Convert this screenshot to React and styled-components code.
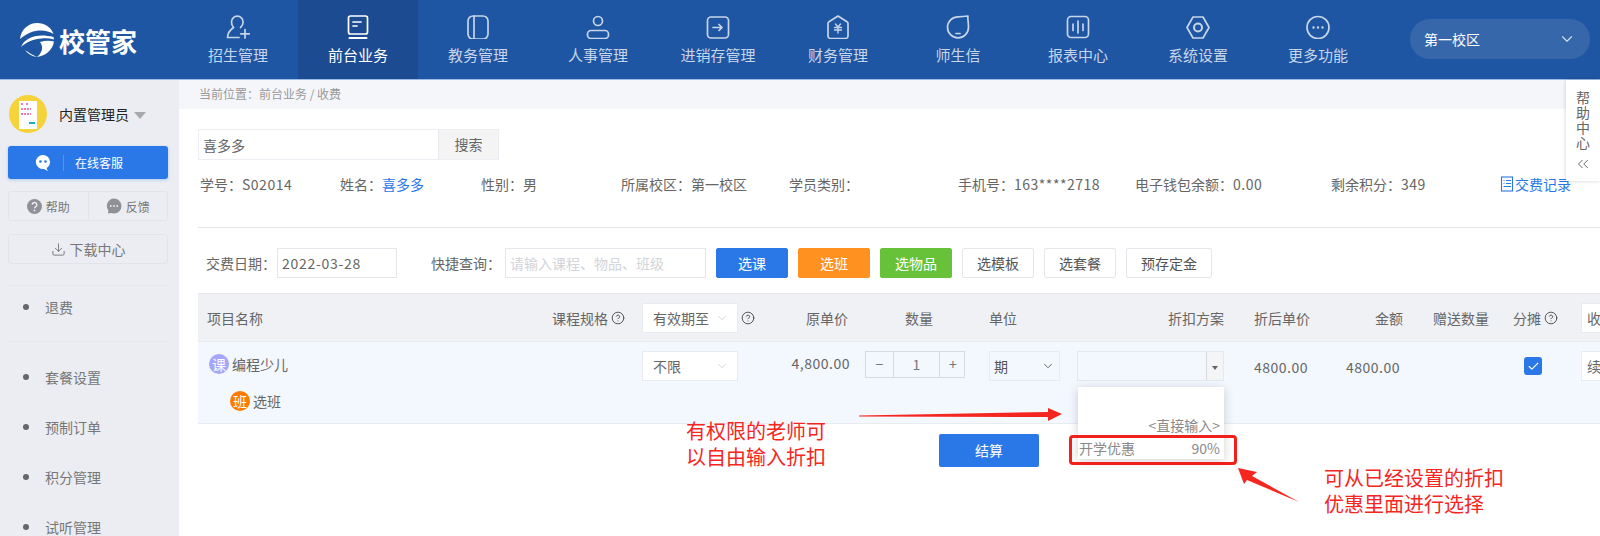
import React from 'react'
import styled, { createGlobalStyle } from 'styled-components'
import { ChevronDown, CircleHelp, ChevronsLeft, Check, Download } from 'lucide-react'

const GlobalStyle = createGlobalStyle`
  html, body {
    margin: 0;
    padding: 0;
    height: 100%;
    overflow: hidden;
    background: #fff;
  }
  body, input {
    font-family: "Noto Sans CJK SC", "Noto Sans", sans-serif;
    font-size: 14px;
    color: #666;
  }
  * {
    box-sizing: border-box;
  }
`

const Page = styled.div`
  position: relative;
  width: 1600px;
  height: 536px;
  overflow: hidden;
`

const Header = styled.header`
  display: flex;
  height: 80px;
  background: #1f56a3;
  border-bottom: 1px solid #9dbbe2;
`

const LogoBox = styled.div`
  width: 178px;
  display: flex;
  align-items: center;
  padding: 1px 0 0 20px;
  gap: 5px;
  color: #fff;
  font-size: 26px;
  font-weight: 700;
`

const Nav = styled.nav`
  display: flex;
`

const NavItem = styled.div`
  width: 120px;
  height: 79px;
  padding-top: 15px;
  display: flex;
  flex-direction: column;
  align-items: center;
  gap: 6px;
  font-size: 15px;
  line-height: 20px;
  color: ${p => (p.$active ? '#fff' : '#c7d5e9')};
  background: ${p => (p.$active ? '#1d4b92' : 'transparent')};
  svg {
    display: block;
  }
`

const Campus = styled.div`
  width: 180px;
  height: 40px;
  margin: 19px 0 0 32px;
  padding: 0 14px;
  border-radius: 20px;
  background: #3767ab;
  color: #fff;
  display: flex;
  align-items: center;
  justify-content: space-between;
  font-size: 14px;
`

const Body = styled.div`
  display: flex;
  height: 456px;
`

const Sidebar = styled.aside`
  width: 179px;
  flex: none;
  background: #ebedf2;
  padding: 15px 11px 0 8px;
  overflow: hidden;
`

const UserRow = styled.div`
  display: flex;
  align-items: center;
  height: 38px;
  padding-left: 1px;
  color: #222;
  font-size: 14px;
`

const UserName = styled.span`
  margin-left: 12px;
`

const Caret = styled.i`
  width: 0;
  height: 0;
  margin: 3px 0 0 5px;
  border-left: 6px solid transparent;
  border-right: 6px solid transparent;
  border-top: 7px solid #a6a8ad;
`

const ServiceButton = styled.div`
  height: 33px;
  margin-top: 13px;
  background: #2a78e8;
  border-radius: 3px;
  color: #fff;
  font-size: 12px;
  display: flex;
  align-items: center;
  padding-left: 27px;
  box-shadow: 0 1px 3px rgba(42, 120, 232, 0.3);
`

const ServiceLine = styled.span`
  width: 1px;
  height: 16px;
  margin: 0 11px 0 12px;
  background: rgba(255, 255, 255, 0.2);
`

const HelpGroup = styled.div`
  display: flex;
  height: 30px;
  margin-top: 12px;
  border: 1px solid #e2e4ea;
  border-radius: 3px;
`

const HelpCell = styled.div`
  flex: 1;
  display: flex;
  align-items: center;
  justify-content: center;
  gap: 4px;
  font-size: 12px;
  color: #777;
  & + & {
    border-left: 1px solid #e2e4ea;
  }
`

const DownloadCell = styled.div`
  height: 30px;
  margin-top: 13px;
  border: 1px solid #e2e4ea;
  border-radius: 3px;
  display: flex;
  align-items: center;
  justify-content: center;
  gap: 4px;
  color: #777;
`

const MenuGroup = styled.div`
  margin-top: ${p => p.$first ? '21px' : '0'};
  padding: ${p => p.$first ? '0 0 13px' : '10px 0 0'};
  border-top: 1px solid #e4e6eb;
`

const MenuItem = styled.div`
  display: flex;
  align-items: center;
  height: ${p => (p.$short ? '42px' : '50px')};
  padding-left: 15px;
  color: #777;
  &::before {
    content: '';
    width: 6px;
    height: 6px;
    margin-right: 16px;
    border-radius: 50%;
    background: #666;
  }
`

const Main = styled.main`
  flex: 1;
  min-width: 0;
  overflow: hidden;
`

const Crumb = styled.div`
  height: 29px;
  padding-left: 20px;
  line-height: 27px;
  font-size: 12px;
  color: #999;
  background: #f5f6fa;
`

const Content = styled.div`
  padding: 20px 0 0 19px;
`

const SearchBar = styled.div`
  display: flex;
  width: 301px;
  height: 31px;
  border: 1px solid #eceef3;
`

const SearchInput = styled.input`
  flex: 1;
  min-width: 0;
  border: 0;
  outline: 0;
  padding: 0 4px;
  color: #666;
`

const SearchButton = styled.div`
  width: 60px;
  background: #f4f4f5;
  border-left: 1px solid #e8e9ee;
  text-align: center;
  line-height: 29px;
`

const InfoRow = styled.div`
  display: grid;
  grid-template-columns: 140px 141px 140px 168px 169px 177px 196px 169px auto;
  margin: 14px 0 0 2px;
  line-height: 20px;
  white-space: nowrap;
`

const Num = styled.span`
  letter-spacing: 0.5px;
`

const Link = styled.span`
  color: #2a78e8;
`

const RecordLink = styled(Link)`
  display: flex;
  align-items: center;
  gap: 1px;
`

const Divider = styled.hr`
  height: 1px;
  margin: 33px 0 0;
  border: 0;
  background: #e4e5e9;
`

const Toolbar = styled.div`
  display: flex;
  align-items: center;
  gap: 10px;
  margin-top: 20px;
  padding-left: 8px;
`

const Label = styled.span`
  width: ${p => p.$w}px;
  flex: none;
  white-space: nowrap;
`

const TextInput = styled.input`
  width: ${p => p.$w}px;
  height: 30px;
  margin: ${p => p.$m || 0};
  padding: 0 4px;
  border: 1px solid #e4e6ec;
  outline: 0;
  color: #666;
  letter-spacing: ${p => (p.$num ? '0.7px' : '0')};
  &::placeholder {
    color: #d2d4d9;
  }
`

const Button = styled.div`
  min-width: 72px;
  height: 30px;
  padding: 0 14px;
  border-radius: 2px;
  line-height: 28px;
  text-align: center;
  white-space: nowrap;
  border: 1px solid ${p => p.$bg || '#e4e6ec'};
  background: ${p => p.$bg || '#fff'};
  color: ${p => (p.$bg ? '#fff' : '#555')};
`

const Table = styled.div`
  margin-top: 15px;
  width: 1500px;
`

const columns = '342px 94px 136px 87px 124px 88px 164px 87px 92px 88px 73px 100px'

const HeadRow = styled.div`
  display: grid;
  grid-template-columns: ${columns};
  align-items: center;
  height: 49px;
  background: #f0f1f5;
  border-top: 1px solid #e8e9ee;
  border-bottom: 1px solid #eaecf1;
`

const DataRow = styled.div`
  display: grid;
  grid-template-columns: ${columns};
  align-items: start;
  height: 82px;
  padding-top: 9px;
  background: #f3f8fe;
  border-bottom: 1px solid #e8ebf0;
`

const Cell = styled.div`
  display: flex;
  align-items: center;
  justify-content: ${p => p.$end ? 'flex-end' : p.$center ? 'center' : 'flex-start'};
  gap: 3px;
  padding: ${p => `${p.$top || 0}px ${p.$r || 0}px 0 ${p.$l || 0}px`};
  white-space: nowrap;
`

const NameCell = styled.div`
  padding-left: 11px;
`

const NameLine = styled.div`
  display: flex;
  align-items: center;
  gap: 3px;
  height: 20px;
  margin-top: ${p => p.$top || 3}px;
  padding-left: ${p => p.$indent || 0}px;
`

const Badge = styled.span`
  width: 20px;
  height: 20px;
  border-radius: 50%;
  flex: none;
  background: ${p => p.$bg};
  color: #fff;
  font-size: 14px;
  line-height: 20px;
  text-align: center;
`

const SelectBox = styled.div`
  width: ${p => p.$w}px;
  height: 30px;
  flex: none;
  padding: 0 ${p => p.$pr || 8}px 0 ${p => p.$pl || 10}px;
  display: flex;
  align-items: center;
  justify-content: space-between;
  background: #fff;
  border: 1px solid #e8ebf2;
  overflow: hidden;
  color: #666;
`

const UnitBox = styled(SelectBox)`
  background: transparent;
  color: #555;
`

const Stepper = styled.div`
  display: grid;
  grid-template-columns: 27px 46px 27px;
  width: 100px;
  height: 27px;
  border: 1px solid #d8dade;
  text-align: center;
  line-height: 25px;
  color: #777;
`

const StepCell = styled.span`
  & + & {
    border-left: 1px solid #d8dade;
  }
`

const Combo = styled.div`
  width: 147px;
  height: 30px;
  display: flex;
  justify-content: flex-end;
  border: 1px solid #e4e8f0;
`

const ComboArrow = styled.div`
  width: 17px;
  display: flex;
  align-items: center;
  justify-content: center;
  border-left: 1px solid #d6d9de;
  background: #f4f5f7;
  &::after {
    content: '';
    margin-top: 3px;
    border-left: 3px solid transparent;
    border-right: 3px solid transparent;
    border-top: 4px solid #666;
  }
`

const CheckBox = styled.span`
  width: 18px;
  height: 18px;
  border-radius: 3px;
  background: #2a78e8;
  color: #fff;
  display: flex;
  align-items: center;
  justify-content: center;
`

const SettleRow = styled.div`
  margin: 10px 0 0 741px;
`

const SettleButton = styled.div`
  width: 100px;
  height: 33px;
  border-radius: 2px;
  background: #2a78e8;
  color: #fff;
  text-align: center;
  line-height: 33px;
`

const Popup = styled.div`
  position: absolute;
  left: 1078px;
  top: 387px;
  width: 146px;
  height: 72px;
  padding: 27px 4px 0 1px;
  background: #fff;
  box-shadow: 0 2px 10px rgba(0, 0, 0, 0.18);
  color: #8a8a8a;
`

const PopupLine = styled.div`
  display: flex;
  justify-content: ${p => (p.$between ? 'space-between' : 'flex-end')};
  height: 22px;
  line-height: 22px;
  margin-bottom: 1px;
`

const Note = styled.div`
  position: absolute;
  left: ${p => p.$x}px;
  top: ${p => p.$y}px;
  color: #f5261f;
  font-size: 20px;
  line-height: 26px;
  white-space: nowrap;
`

const RedFrame = styled.div`
  position: absolute;
  left: 1069px;
  top: 435px;
  width: 168px;
  height: 30px;
  border: 3px solid #f0211a;
  border-radius: 4px;
`

const Marks = styled.svg`
  position: absolute;
  left: 0;
  top: 0;
  pointer-events: none;
`

const HelpFloat = styled.div`
  position: absolute;
  right: 0;
  top: 80px;
  width: 34px;
  height: 101px;
  padding-top: 11px;
  display: flex;
  flex-direction: column;
  align-items: center;
  background: #fff;
  box-shadow: 0 0 4px rgba(0, 0, 0, 0.18);
  color: #666;
  svg {
    margin-top: 4px;
  }
`

const HelpText = styled.span`
  writing-mode: vertical-rl;
  font-size: 14px;
  line-height: 16px;
  letter-spacing: 1px;
`

const Stroke = ({ children, size = 24 }) => (
  <svg width={size} height={size} viewBox="0 0 24 24" fill="none" stroke="currentColor" strokeWidth="1.7" strokeLinecap="round" strokeLinejoin="round">
    {children}
  </svg>
)

const navItems = [
  ['招生管理', <><path d="M7.5 12.5C5.8 10.8 5.5 8.5 5.5 7a5.8 5.8 0 0 1 11.6 0c0 2-.9 4-2.6 5.5" /><path d="M7.5 12.5C4 15 1.6 18.500 1.500 22.500H13" /><path d="M19 14.500V23M14.800 18.800H23.300" /></>],
  ['前台业务', <><rect x="2.500" y="1" width="19" height="18" rx="2" /><path d="M7 7h8M7 11h4" /><path d="M3.500 23h17" strokeWidth="2" /></>],
  ['教务管理', <><rect x="2" y="1" width="20" height="23" rx="5" /><path d="M8 1v23" /></>],
  ['人事管理', <><circle cx="12" cy="6" r="4.500" /><rect x="1.500" y="15.500" width="21" height="8" rx="3.500" /></>],
  ['进销存管理', <><rect x="1.500" y="2" width="21" height="21" rx="3.500" /><path d="M7 12.500h9M13 9.500l3 3-3 3" /></>],
  ['财务管理', <><path d="M12 1L21 6.800a2 2 0 0 1 1 1.700V21a2.500 2.500 0 0 1-2.500 2.500h-15A2.500 2.500 0 0 1 2 21V8.500a2 2 0 0 1 1-1.700z" /><path d="M9.500 9l2.500 3 2.500-3M8.500 12.500h7M8.500 15h7M12 12.500V18" strokeWidth="1.400" /></>],
  ['师生信', <><path d="M12 1.800c3 0 6-.2 10-.8-.8 1.500.5 5 .5 11.500a10.500 10.500 0 1 1-10.500-10.700z" /><path d="M10 18.500h4" /></>],
  ['报表中心', <><rect x="1.500" y="1.500" width="21" height="21" rx="3.500" /><path d="M7 9v6.500M12 6v12M17 9v6.500" /></>],
  ['系统设置', <><path d="M7 2h10l6 10.500L17 23H7L1 12.500z" /><circle cx="12" cy="12.500" r="4" strokeWidth="2" /></>],
  ['更多功能', <><circle cx="12" cy="12.500" r="11" /><path d="M7.500 12.500h.01M12 12.500h.01M16.500 12.500h.01" strokeWidth="2.400" /></>],
]

const Logo = () => (
  <svg width="34" height="34" viewBox="0 0 34 34" fill="#fff">
    <path d="M0 16C1 6 9 0 17 0C25 0 31 4 33.500 11C26 6 12 5 0 16Z" />
    <path d="M1 24C5 14 18 10 33.500 14L34 16.500C30 15.500 26 15 22 15.500C14 16 6 19 1 24Z" />
    <path d="M20 19C25 17.500 30 17.500 34 18.500C33 26 26 33 17 34C22 30 24 24 20 19Z" />
    <path d="M5 27C9 30 13 32 17 34C12 33.500 8 31 5 27Z" />
  </svg>
)

const Avatar = () => (
  <svg width="38" height="38" viewBox="0 0 38 38">
    <defs>
      <clipPath id="avatar-clip"><circle cx="19" cy="19" r="19" /></clipPath>
    </defs>
    <g clipPath="url(#avatar-clip)">
      <rect width="38" height="38" fill="#f5d33a" />
      <path d="M30 38L38 28V38Z" fill="#555" />
      <rect x="10" y="6" width="18" height="28" fill="#fff" />
      <path d="M12 9h3M17 9h3M12 14h10M12 19h10" stroke="#e8559a" strokeWidth="1.500" strokeDasharray="2 1" />
      <path d="M20 28h6" stroke="#1ba9c9" strokeWidth="2" />
    </g>
  </svg>
)

const ServiceIcon = () => (
  <svg width="16" height="18" viewBox="0 0 16 18">
    <path d="M8 1a7 7 0 0 1 7 7c0 3-1.500 5-3.500 6l1.500 3-4-2.100A7 7 0 1 1 8 1z" fill="#fff" />
    <circle cx="5.500" cy="7.500" r="1.300" fill="#2a78e8" />
    <circle cx="10.500" cy="7.500" r="1.300" fill="#2a78e8" />
  </svg>
)

const HelpIcon = () => (
  <svg width="15" height="15" viewBox="0 0 15 15">
    <circle cx="7.500" cy="7.500" r="7.500" fill="#8f9196" />
    <path d="M5.200 5.800a2.300 2.300 0 1 1 3.400 2c-.8.400-1.100.800-1.100 1.500" fill="none" stroke="#ebedf2" strokeWidth="1.500" />
    <circle cx="7.500" cy="11.500" r="0.900" fill="#ebedf2" />
  </svg>
)

const FeedbackIcon = () => (
  <svg width="16" height="16" viewBox="0 0 16 16">
    <path d="M8 .5a7.500 7.500 0 0 1 0 15c-1 0-2-.2-2.800-.5L2 15.500l.4-3A7.500 7.500 0 0 1 8 .5z" fill="#8f9196" />
    <path d="M4.800 8h.01M8 8h.01M11.200 8h.01" stroke="#ebedf2" strokeWidth="1.800" strokeLinecap="round" />
  </svg>
)

const RecordIcon = () => (
  <svg width="14" height="16" viewBox="0 0 14 16" fill="none" stroke="#2a78e8" strokeWidth="1.100">
    <rect x="1.500" y="1" width="11" height="14" />
    <path d="M3.500 4.500h1M6 4.500h5M3.500 7.500h1M6 7.500h5M3.500 10.500h7.500" />
  </svg>
)

const Tip = () => <CircleHelp size={14} strokeWidth={1.500} color="#444" />

function App () {
  return (
    <Page>
      <GlobalStyle />
      <Header>
        <LogoBox><Logo />校管家</LogoBox>
        <Nav>
          {navItems.map(([label, icon], i) => (
            <NavItem key={label} $active={i === 1}>
              <Stroke>{icon}</Stroke>
              {label}
            </NavItem>
          ))}
        </Nav>
        <Campus>第一校区<ChevronDown size={18} strokeWidth={1.500} color="#d5e0f0" /></Campus>
      </Header>
      <Body>
        <Sidebar>
          <UserRow><Avatar /><UserName>内置管理员</UserName><Caret /></UserRow>
          <ServiceButton><ServiceIcon /><ServiceLine />在线客服</ServiceButton>
          <HelpGroup>
            <HelpCell><HelpIcon />帮助</HelpCell>
            <HelpCell><FeedbackIcon />反馈</HelpCell>
          </HelpGroup>
          <DownloadCell><Download size={15} strokeWidth={1.500} />下载中心</DownloadCell>
          <MenuGroup $first><MenuItem $short>退费</MenuItem></MenuGroup>
          <MenuGroup>
            <MenuItem>套餐设置</MenuItem>
            <MenuItem>预制订单</MenuItem>
            <MenuItem>积分管理</MenuItem>
            <MenuItem>试听管理</MenuItem>
          </MenuGroup>
        </Sidebar>
        <Main>
          <Crumb>当前位置：前台业务 / 收费</Crumb>
          <Content>
            <SearchBar>
              <SearchInput readOnly value="喜多多" />
              <SearchButton>搜索</SearchButton>
            </SearchBar>
            <InfoRow>
              <span>学号：<Num>S02014</Num></span>
              <span>姓名：<Link>喜多多</Link></span>
              <span>性别：男</span>
              <span>所属校区：第一校区</span>
              <span>学员类别：</span>
              <span>手机号：<Num>163****2718</Num></span>
              <span>电子钱包余额：<Num>0.00</Num></span>
              <span>剩余积分：<Num>349</Num></span>
              <RecordLink><RecordIcon />交费记录</RecordLink>
            </InfoRow>
            <Divider />
            <Toolbar>
              <Label $w={62}>交费日期：</Label>
              <TextInput $w={120} $num $m="0 24px 0 -1px" readOnly value="2022-03-28" />
              <Label $w={64}>快捷查询：</Label>
              <TextInput $w={201} readOnly placeholder="请输入课程、物品、班级" />
              <Button $bg="#2a78e8">选课</Button>
              <Button $bg="#ff9120">选班</Button>
              <Button $bg="#67c23a">选物品</Button>
              <Button>选模板</Button>
              <Button>选套餐</Button>
              <Button>预存定金</Button>
            </Toolbar>
            <Table>
              <HeadRow>
                <Cell $l={9}>项目名称</Cell>
                <Cell $end $r={9}>课程规格<Tip /></Cell>
                <Cell $l={8}>
                  <SelectBox $w={96}>有效期至<ChevronDown size={14} strokeWidth={1} color="#bbb" /></SelectBox>
                  <Tip />
                </Cell>
                <Cell $end $r={9}>原单价</Cell>
                <Cell $center>数量</Cell>
                <Cell $l={8}>单位</Cell>
                <Cell $end $r={9}>折扣方案</Cell>
                <Cell $l={21}>折后单价</Cell>
                <Cell $end $r={9}>金额</Cell>
                <Cell $l={21}>赠送数量</Cell>
                <Cell $l={13}>分摊<Tip /></Cell>
                <Cell $l={8}><SelectBox $w={60} $pl={5}>收</SelectBox></Cell>
              </HeadRow>
              <DataRow>
                <NameCell>
                  <NameLine><Badge $bg="#a5a5fb">课</Badge>编程少儿</NameLine>
                  <NameLine $top={17} $indent={21}><Badge $bg="#ff7a00">班</Badge>选班</NameLine>
                </NameCell>
                <span />
                <Cell $l={8}>
                  <SelectBox $w={96}>不限<ChevronDown size={14} strokeWidth={1} color="#bbb" /></SelectBox>
                </Cell>
                <Cell $end $r={7} $top={2}><Num>4,800.00</Num></Cell>
                <Cell $l={8}>
                  <Stepper>
                    <StepCell>−</StepCell>
                    <StepCell>1</StepCell>
                    <StepCell>+</StepCell>
                  </Stepper>
                </Cell>
                <Cell $l={8}>
                  <UnitBox $w={71} $pl={4} $pr={4}>期<ChevronDown size={14} strokeWidth={1.500} color="#555" /></UnitBox>
                </Cell>
                <Cell $l={8}><Combo><ComboArrow /></Combo></Cell>
                <Cell $l={21} $top={6}><Num>4800.00</Num></Cell>
                <Cell $l={26} $top={6}><Num>4800.00</Num></Cell>
                <span />
                <Cell $l={24} $top={6}><CheckBox><Check size={13} strokeWidth={2} /></CheckBox></Cell>
                <Cell $l={8}><SelectBox $w={60} $pl={5}>续</SelectBox></Cell>
              </DataRow>
            </Table>
            <SettleRow><SettleButton>结算</SettleButton></SettleRow>
          </Content>
        </Main>
      </Body>
      <Popup>
        <PopupLine>&lt;直接输入&gt;</PopupLine>
        <PopupLine $between><span>开学优惠</span><span>90%</span></PopupLine>
      </Popup>
      <RedFrame />
      <Marks width="1600" height="536" viewBox="0 0 1600 536">
        <path d="M859 415.500L1048 412V408L1062 414L1048 421V417L859 416.500Z" fill="#f5261f" />
        <path d="M1238 468L1257 472L1252 476L1299 502L1247 480L1244 484Z" fill="#f5261f" />
      </Marks>
      <Note $x={686} $y={418}>有权限的老师可<br />以自由输入折扣</Note>
      <Note $x={1324} $y={465}>可从已经设置的折扣<br />优惠里面进行选择</Note>
      <HelpFloat>
        <HelpText>帮助中心</HelpText>
        <ChevronsLeft size={18} strokeWidth={1.300} />
      </HelpFloat>
    </Page>
  )
}

export default App
